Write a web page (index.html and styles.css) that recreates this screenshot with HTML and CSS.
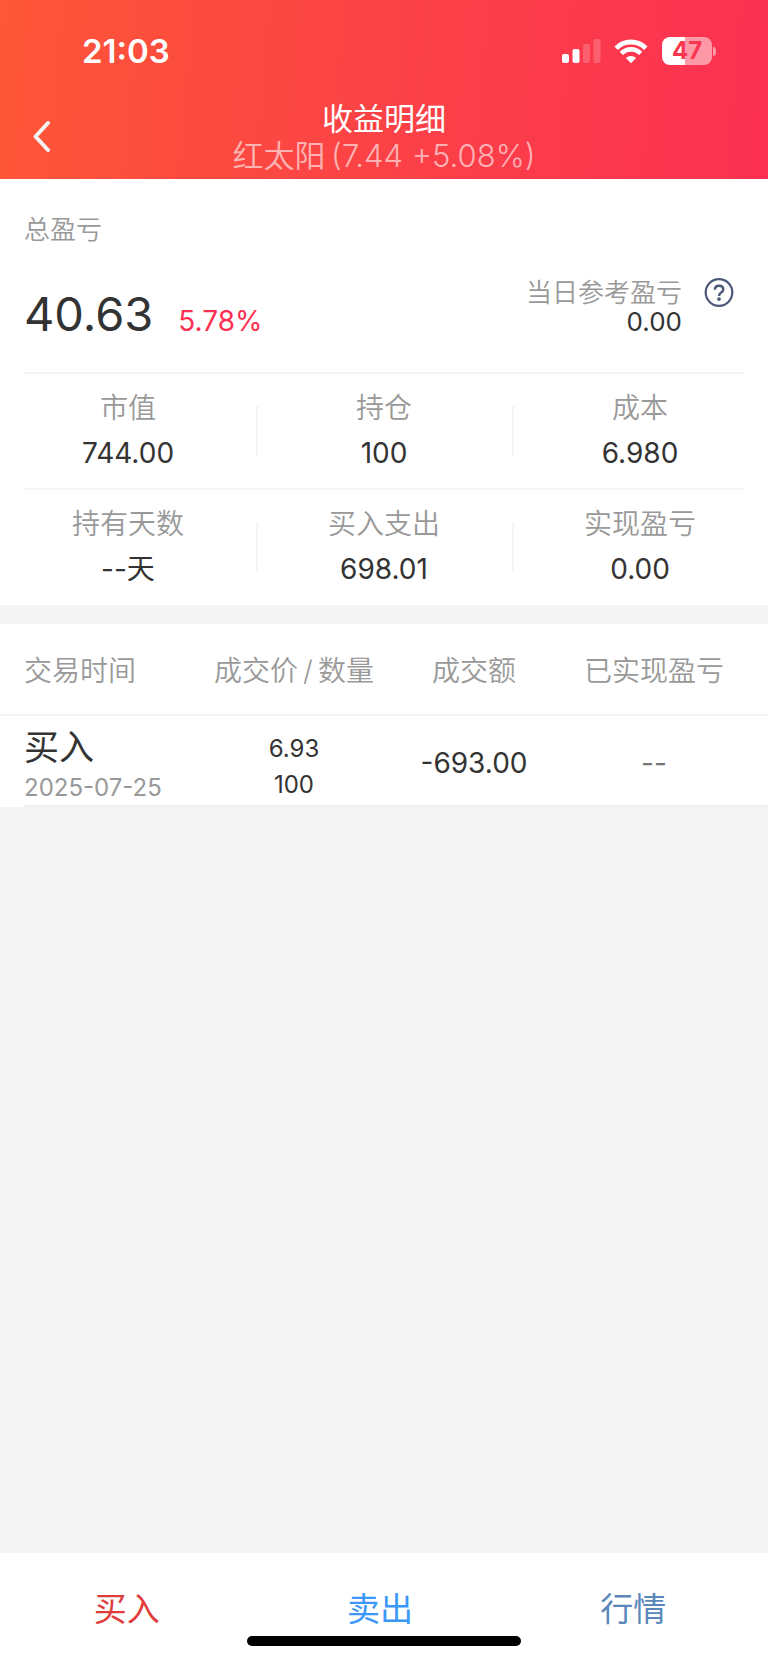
FILE: index.html
```html
<!DOCTYPE html>
<html lang="zh-CN">
<head>
    <meta charset="UTF-8">
    <meta name="viewport" content="width=device-width, initial-scale=1.0">
    <title>收益明细</title>
    <link rel="stylesheet" href="styles.css">
</head>
<body>

    <header class="header">
        <div class="status-bar">
            <span class="clock">21:03</span>
            <div class="status-icons">
                <svg class="signal" width="40" height="28" viewBox="0 0 40 28" fill="#fff">
                    <rect x="0" y="17" width="7" height="9" rx="2"/>
                    <rect x="10.5" y="12" width="7" height="14" rx="2"/>
                    <rect x="21" y="7" width="7" height="19" rx="2" opacity="0.2"/>
                    <rect x="31.5" y="2" width="7" height="24" rx="2" opacity="0.2"/>
                </svg>
                <svg class="wifi" width="34" height="28" viewBox="0 0 34 28" fill="none" stroke="#fff" stroke-width="5">
                    <path d="M2.2 11.2 A21 21 0 0 1 31.8 11.2"/>
                    <path d="M7.3 16.4 A13.7 13.7 0 0 1 26.7 16.4" stroke-width="4.6"/>
                    <path d="M17 26.2 L11.9 21 A7.2 7.2 0 0 1 22.1 21 Z" fill="#fff" stroke="none"/>
                </svg>
                <div class="battery">
                    <div class="battery-body">47</div>
                    <div class="battery-cap"></div>
                </div>
            </div>
        </div>
        <div class="nav">
            <button class="back" type="button" aria-label="返回">
                <svg width="18" height="32" viewBox="0 0 18 32" fill="none" stroke="#f4f4f4" stroke-width="4" stroke-linecap="round" stroke-linejoin="round">
                    <path d="M15 2 L2.5 15.5 L15 29"/>
                </svg>
            </button>
            <div class="nav-title">
                <h1>收益明细</h1>
                <p>红太阳&thinsp;(7.44 +5.08%)</p>
            </div>
        </div>
    </header>

    <main>
        <section class="summary">
            <div class="total">
                <h2>总盈亏</h2>
                <div class="total-row">
                    <div class="total-value">
                        <strong>40.63</strong>
                        <span>5.78%</span>
                    </div>
                    <div class="today">
                        <div class="today-text">
                            <span class="today-label">当日参考盈亏</span>
                            <span class="today-value">0.00</span>
                        </div>
                        <button class="help" type="button" aria-label="说明">
                            <svg width="30" height="30" viewBox="0 0 30 30" fill="none" stroke="#4b5878">
                                <circle cx="15" cy="14.5" r="13.3" stroke-width="2.2"/>
                                <path d="M10.9 11.8 C10.9 9.3 12.6 7.8 15 7.8 C17.5 7.8 19.2 9.3 19.2 11.4 C19.2 12.9 18.4 13.7 17.2 14.5 C15.8 15.4 15.1 16.1 15.1 17.9" stroke-width="2.5"/>
                                <circle cx="15" cy="21.1" r="1.9" fill="#4b5878" stroke="none"/>
                            </svg>
                        </button>
                    </div>
                </div>
            </div>

            <dl class="stats">
                <div class="stat"><dt>市值</dt><dd>744.00</dd></div>
                <div class="stat"><dt>持仓</dt><dd>100</dd></div>
                <div class="stat"><dt>成本</dt><dd>6.980</dd></div>
            </dl>
            <dl class="stats">
                <div class="stat"><dt>持有天数</dt><dd>--天</dd></div>
                <div class="stat"><dt>买入支出</dt><dd>698.01</dd></div>
                <div class="stat"><dt>实现盈亏</dt><dd>0.00</dd></div>
            </dl>
        </section>

        <section class="records">
            <table>
                <thead>
                    <tr>
                        <th>交易时间</th>
                        <th>成交价&thinsp;/&thinsp;数量</th>
                        <th>成交额</th>
                        <th>已实现盈亏</th>
                    </tr>
                </thead>
                <tbody>
                    <tr>
                        <td>
                            <div class="side">买入</div>
                            <div class="date">2025-07-25</div>
                        </td>
                        <td class="price">6.93<br>100</td>
                        <td class="amount">-693.00</td>
                        <td class="profit">--</td>
                    </tr>
                </tbody>
            </table>
        </section>
    </main>

    <footer class="bottom">
        <nav class="tabs">
            <a class="buy" href="#buy">买入</a>
            <a class="sell" href="#sell">卖出</a>
            <a class="quote" href="#quote">行情</a>
        </nav>
        <div class="home-bar"></div>
    </footer>

</body>
</html>
```

FILE: styles.css
```css
* {
    box-sizing: border-box;
}

body {
    margin: 0;
    min-height: 100vh;
    display: flex;
    flex-direction: column;
    font-family: Inter, "Noto Sans CJK SC", sans-serif;
    font-size: 28px;
    font-weight: 400;
    line-height: 36px;
    color: #333;
    background-color: #f5f5f5;
}

h1, h2, p, dl, dd {
    margin: 0;
    font-size: inherit;
    font-weight: inherit;
}

button {
    padding: 0;
    border: none;
    background: none;
    cursor: pointer;
}

svg {
    display: block;
}

/* header */

.header {
    color: #fff;
    background: linear-gradient(95deg, #fe5637, #fb4246 50%, #fc3052);
}

.status-bar {
    display: flex;
    justify-content: space-between;
    align-items: center;
    height: 100px;
    padding: 2px 52px 0 82px;
}

.clock {
    font-size: 33px;
    font-weight: 600;
}

.status-icons {
    display: flex;
    align-items: center;
}

.wifi {
    margin: 0 14px 0 12px;
}

.battery {
    display: flex;
    align-items: center;
    gap: 1px;
}

.battery-body {
    width: 50px;
    height: 28px;
    border-radius: 8px;
    font-size: 24px;
    font-weight: 700;
    line-height: 28px;
    text-align: center;
    color: #fb3650;
    background: linear-gradient(90deg, #fff 47%, rgba(255, 255, 255, 0.5) 47%);
}

.battery-cap {
    width: 3px;
    height: 9px;
    border-radius: 0 4px 4px 0;
    background-color: rgba(255, 255, 255, 0.5);
}

.nav {
    display: grid;
    grid-template-columns: 80px 1fr 80px;
    padding-bottom: 5px;
}

.back {
    display: flex;
    align-items: center;
    padding-left: 33px;
}

.nav-title {
    text-align: center;
    font-size: 31px;
    line-height: 37px;
}

.nav-title p {
    font-weight: 350;
    color: rgba(255, 255, 255, 0.6);
}

/* summary */

.summary {
    padding-bottom: 1px;
    background-color: #fff;
}

.total {
    margin: 0 24px;
    padding: 33px 0 30px;
}

.total h2 {
    font-size: 26px;
    font-weight: 350;
    color: #999;
}

.total-row {
    display: flex;
    justify-content: space-between;
    align-items: flex-start;
    padding-top: 30px;
}

.total-value {
    display: flex;
    align-items: baseline;
    gap: 25px;
    padding-top: 8px;
}

.total-value strong {
    font-size: 47px;
    font-weight: 400;
    line-height: 56px;
}

.total-value span {
    color: #fc3052;
}

.today {
    display: flex;
    align-items: flex-start;
    gap: 22px;
    padding-right: 10px;
}

.today-text {
    display: flex;
    flex-direction: column;
    text-align: right;
    line-height: 29px;
}

.today-label {
    font-size: 26px;
    font-weight: 350;
    color: #999;
}

.today-value {
    font-size: 26px;
}

.stats {
    display: grid;
    grid-template-columns: repeat(3, 1fr);
    padding: 16px 0 15px;
    /* inset rule on top of the row */
    background: linear-gradient(#f5f5f5, #f5f5f5) center top / calc(100% - 48px) 2px no-repeat;
}

.stat {
    text-align: center;
    line-height: 40px;
}

.stat + .stat {
    background: linear-gradient(#f5f5f5, #f5f5f5) left center / 2px 50px no-repeat;
}

.stat dt {
    font-weight: 350;
    color: #999;
}

.stat dd {
    padding-top: 5px;
}

/* records */

.records {
    margin-top: 19px;
    background-color: #fff;
}

.records::after {
    content: "";
    display: block;
    height: 2px;
    margin-left: 24px;
    background-color: #eee;
}

table {
    width: 100%;
    table-layout: fixed;
    border-collapse: collapse;
}

th, td {
    padding: 0;
    text-align: center;
    white-space: nowrap;
}

th:first-child, td:first-child {
    width: 204px;
    padding-left: 24px;
    text-align: left;
}

th:last-child, td:last-child {
    width: 204px;
    padding-right: 24px;
}

th {
    height: 91px;
    padding-top: 4px;
    font-weight: 350;
    color: #999;
    border-bottom: 2px solid #f5f5f5;
}

td {
    height: 89px;
}

.side {
    padding-top: 8px;
    font-size: 35px;
    line-height: 47px;
}

.date {
    font-size: 24px;
    line-height: 34px;
    color: #999;
}

.price {
    padding-top: 12px;
    font-size: 24px;
}

.amount, .profit {
    padding-top: 4px;
}

.profit {
    color: #777;
}

/* bottom bar */

.bottom {
    margin-top: auto;
    padding: 33px 0 17px;
    background-color: #fff;
}

.tabs {
    display: grid;
    grid-template-columns: repeat(3, 1fr);
    padding-right: 8px;
    text-align: center;
    font-size: 33px;
    line-height: 46px;
}

.tabs a {
    text-decoration: none;
}

.buy {
    color: #e03c3c;
}

.sell {
    color: #3c98f8;
}

.quote {
    color: #5b88bb;
}

.home-bar {
    width: 274px;
    height: 10px;
    margin: 4px auto 0;
    border-radius: 5px;
    background-color: #000;
}
```
